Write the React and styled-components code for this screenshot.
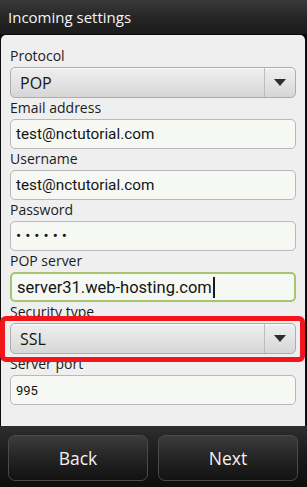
import styled, { createGlobalStyle } from 'styled-components';

const GlobalStyle = createGlobalStyle`
  html, body {
    margin: 0;
    padding: 0;
    background: #0c0c0c;
  }
  * {
    box-sizing: border-box;
  }
`;

const Screen = styled.div`
  width: 307px;
  height: 487px;
  display: flex;
  flex-direction: column;
  font-family: 'Open Sans', 'DejaVu Sans', sans-serif;
  background: #0c0c0c;
  overflow: hidden;
`;

const TitleBar = styled.div`
  height: 34px;
  display: flex;
  align-items: center;
  padding-left: 8px;
  color: #f4f4f4;
  font-size: 15px;
  background: linear-gradient(#3a3a3a, #262626 50%, #1b1b1b);
`;

const Panel = styled.div`
  flex: 1;
  margin: 1px 2px 0 1px;
  padding: 12px 9px 0 9px;
  background: #efefef;
  border-radius: 5px 5px 0 0;
  display: flex;
  flex-direction: column;
  gap: 1px;
`;

const Group = styled.div`
  display: flex;
  flex-direction: column;
`;

const Label = styled.div`
  font-size: 14px;
  line-height: 17px;
  color: #1c1c1c;
  margin-bottom: 3px;
`;

const Select = styled.div`
  height: 31px;
  display: flex;
  align-items: stretch;
  border: 1px solid #acacac;
  border-radius: 5px;
  background: linear-gradient(#efefef, #e2e2e2 55%, #d6d6d6);
  box-shadow: inset 0 1px 0 #fafafa;
`;

const SelectValue = styled.div`
  flex: 1;
  display: flex;
  align-items: center;
  padding-left: 9px;
  font-size: 16px;
  color: #151515;
`;

const SelectArrow = styled.div`
  width: 31px;
  display: flex;
  align-items: center;
  justify-content: center;
  border-left: 1px solid #bdbdbd;

  &::before {
    content: '';
    width: 0;
    height: 0;
    border-left: 6px solid transparent;
    border-right: 6px solid transparent;
    border-top: 7px solid #2e2e2e;
  }
`;

const Input = styled.div`
  height: 30px;
  display: flex;
  align-items: center;
  padding-left: 5px;
  border: ${p => (p.$focused ? '2px solid #a8c46e' : '1px solid #b8b8b8')};
  border-radius: 5px;
  background: #f6f8f3;
  color: #141414;
  font-family: Roboto, 'Open Sans', sans-serif;
  font-size: ${p => p.$size || 15.3}px;
  letter-spacing: ${p => p.$spacing || 0}px;
  white-space: nowrap;
`;

const Caret = styled.span`
  display: inline-block;
  width: 2px;
  height: 21px;
  margin-left: 1px;
  background: #1a1a1a;
`;

const Highlight = styled.div`
  position: relative;

  &::after {
    content: '';
    position: absolute;
    top: -7px;
    bottom: -8px;
    left: -10px;
    right: -9px;
    border: 5px solid #f2161b;
    border-radius: 6px;
    pointer-events: none;
  }
`;

const Footer = styled.div`
  height: 61px;
  display: flex;
  gap: 10px;
  padding: 9px 9px 6px 8px;
  background: linear-gradient(#2e2e2e, #1a1a1a 50%, #0e0e0e);
`;

const Button = styled.div`
  flex: 1;
  display: flex;
  align-items: center;
  justify-content: center;
  border: 1px solid #4a4a4a;
  border-radius: 7px;
  background: linear-gradient(#3c3c3c, #262626 45%, #121212);
  color: #f2f2f2;
  font-size: 17.5px;
`;

export default function App() {
  return (
    <Screen>
      <GlobalStyle />
      <TitleBar>Incoming settings</TitleBar>
      <Panel>
        <Group>
          <Label>Protocol</Label>
          <Select>
            <SelectValue>POP</SelectValue>
            <SelectArrow />
          </Select>
        </Group>
        <Group>
          <Label>Email address</Label>
          <Input>test@nctutorial.com</Input>
        </Group>
        <Group>
          <Label>Username</Label>
          <Input>test@nctutorial.com</Input>
        </Group>
        <Group>
          <Label>Password</Label>
          <Input $spacing={4}>••••••</Input>
        </Group>
        <Group>
          <Label>POP server</Label>
          <Input $focused $size={16.5}>
            server31.web-hosting.com
            <Caret />
          </Input>
        </Group>
        <Group>
          <Label>Security type</Label>
          <Highlight>
            <Select>
              <SelectValue>SSL</SelectValue>
              <SelectArrow />
            </Select>
          </Highlight>
        </Group>
        <Group>
          <Label>Server port</Label>
          <Input $size={13}>995</Input>
        </Group>
      </Panel>
      <Footer>
        <Button>Back</Button>
        <Button>Next</Button>
      </Footer>
    </Screen>
  );
}
